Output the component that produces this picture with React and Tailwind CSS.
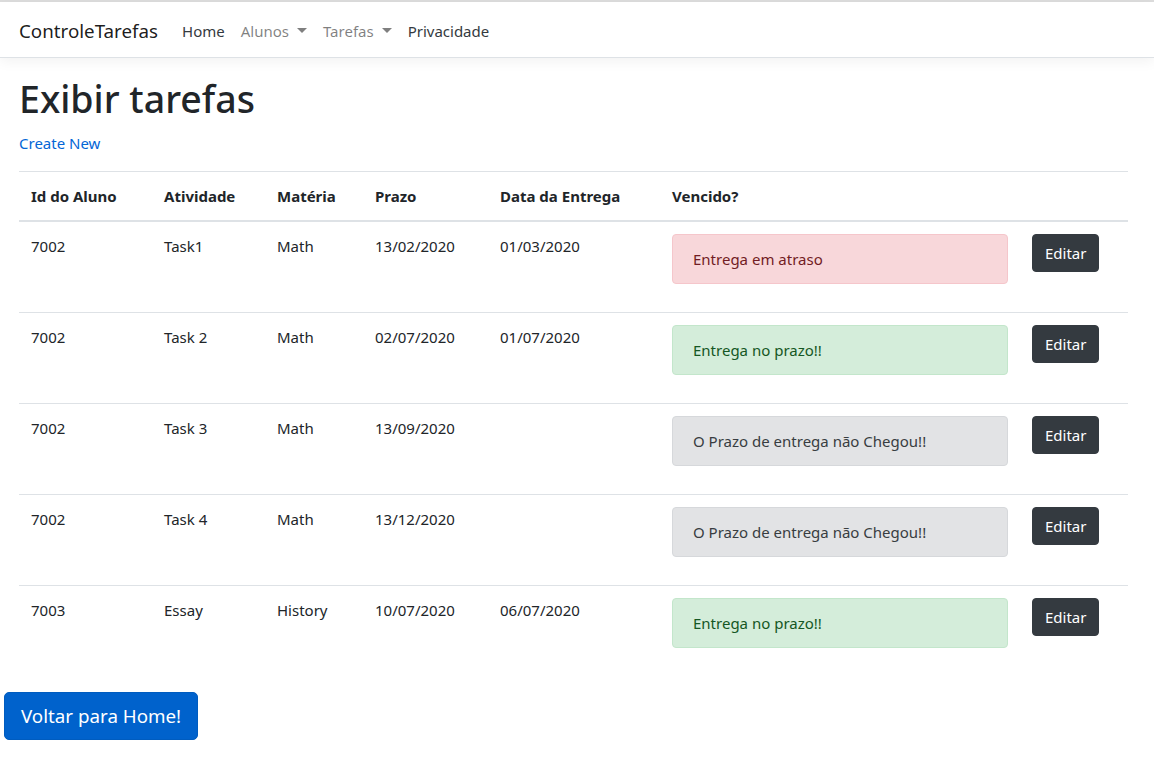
import React from 'react';

const rows = [
  { id: '7002', task: 'Task1', subject: 'Math', due: '13/02/2020', delivered: '01/03/2020', status: 'late' },
  { id: '7002', task: 'Task 2', subject: 'Math', due: '02/07/2020', delivered: '01/07/2020', status: 'ok' },
  { id: '7002', task: 'Task 3', subject: 'Math', due: '13/09/2020', delivered: '', status: 'pending' },
  { id: '7002', task: 'Task 4', subject: 'Math', due: '13/12/2020', delivered: '', status: 'pending' },
  { id: '7003', task: 'Essay', subject: 'History', due: '10/07/2020', delivered: '06/07/2020', status: 'ok' },
];

const alerts = {
  late: { text: 'Entrega em atraso', cls: 'bg-[#f8d7da] border-[#f5c6cb] text-[#721c24]' },
  ok: { text: 'Entrega no prazo!!', cls: 'bg-[#d4edda] border-[#c3e6cb] text-[#155724]' },
  pending: { text: 'O Prazo de entrega não Chegou!!', cls: 'bg-[#e2e3e5] border-[#d6d8db] text-[#383d41]' },
};

const Caret = () => (
  <span className="inline-block ml-[8px] align-[4px] w-0 h-0 border-t-[5px] border-t-current border-x-[5px] border-x-transparent" />
);

const App = () => {
  return (
    <div className="min-h-screen bg-white text-[#212529] text-[15px] leading-6" style={{ fontFamily: '"Noto Sans", "Open Sans", sans-serif' }}>
      <div className="h-[2px] bg-[#dcdcdc]" />
      <nav className="h-[56px] flex items-center pt-[2px] pl-[19px] bg-white border-b border-[#dee2e6] shadow-[0_4px_12px_rgba(0,0,0,0.05)]">
        <a className="text-[18.75px] leading-[30px] text-[rgba(0,0,0,0.9)] mr-4">ControleTarefas</a>
        <ul className="flex items-center">
          <li className="px-2 text-[#343a40]">Home</li>
          <li className="px-2 text-[rgba(0,0,0,0.5)]">Alunos<Caret /></li>
          <li className="px-2 text-[rgba(0,0,0,0.5)]">Tarefas<Caret /></li>
          <li className="px-2 text-[#343a40]">Privacidade</li>
        </ul>
      </nav>

      <main className="pt-[17px]">
        <div className="pl-[19px] pr-[26px]">
          <h1 className="text-[37.5px] leading-[48px] font-medium mb-2">Exibir tarefas</h1>
          <p className="mb-4">
            <a className="text-[#0366d6]">Create New</a>
          </p>
          <table className="w-full border-collapse mb-4 table-fixed">
            <thead>
              <tr className="border-t border-[#dee2e6] border-b-2 border-b-[#dee2e6] text-left">
                <th className="w-[133px] p-3 font-bold">Id do Aluno</th>
                <th className="w-[113px] p-3 font-bold">Atividade</th>
                <th className="w-[98px] p-3 font-bold">Matéria</th>
                <th className="w-[125px] p-3 font-bold">Prazo</th>
                <th className="w-[172px] p-3 font-bold">Data da Entrega</th>
                <th className="w-[360px] p-3 font-bold">Vencido?</th>
                <th className="p-3"></th>
              </tr>
            </thead>
            <tbody>
              {rows.map((r, i) => (
                <tr key={i} className={i > 0 ? 'border-t border-[#dee2e6] align-top' : 'align-top'}>
                  <td className="p-3">{r.id}</td>
                  <td className="p-3">{r.task}</td>
                  <td className="p-3">{r.subject}</td>
                  <td className="p-3">{r.due}</td>
                  <td className="p-3">{r.delivered}</td>
                  <td className="p-3">
                    <div className={`border rounded-[4px] py-3 px-5 mb-4 ${alerts[r.status].cls}`}>
                      {alerts[r.status].text}
                    </div>
                  </td>
                  <td className="p-3">
                    <button className="bg-[#343a40] text-white px-3 py-[6px] rounded-[4px] border border-[#343a40]">Editar</button>
                  </td>
                </tr>
              ))}
            </tbody>
          </table>
        </div>
        <button className="ml-[4px] bg-[#0062cc] text-white text-[18.75px] leading-[30px] px-4 py-2 rounded-[5px] border border-[#005cbf]">
          Voltar para Home!
        </button>
      </main>
    </div>
  );
};

export default App;
